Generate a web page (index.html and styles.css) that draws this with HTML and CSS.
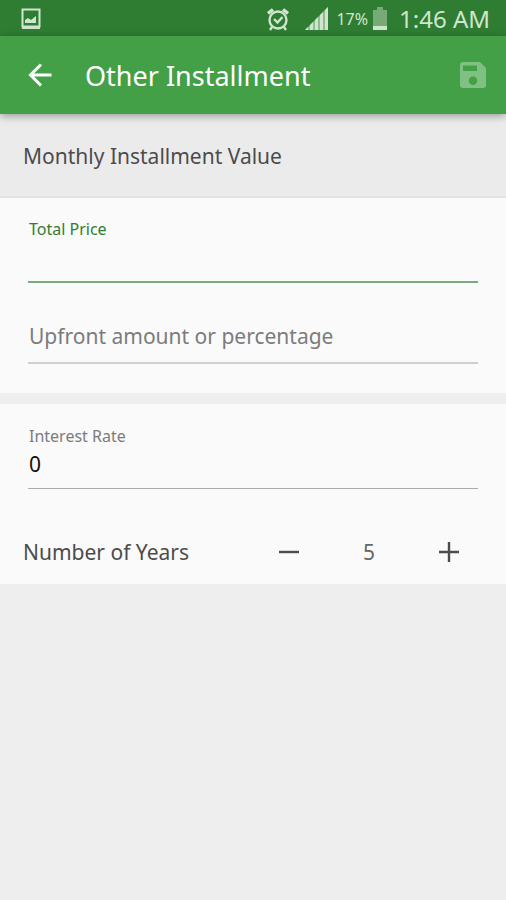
FILE: index.html
```html
<!DOCTYPE html>
<html lang="en">
<head>
<meta charset="utf-8">
<meta name="viewport" content="width=device-width, initial-scale=1">
<title>Other Installment</title>
<link rel="stylesheet" href="styles.css">
</head>
<body>
<div class="status">
  <svg class="status-picture" width="20" height="22" viewBox="0 0 20 22" aria-hidden="true"><path fill="none" stroke="currentColor" stroke-width="2" d="M1.500 1.500h17v17h-17z"/><path fill="currentColor" d="M1 18h18v3H1zM4 15v-3l3-2 3 2 5-4v7z"/></svg>
  <svg class="status-alarm" width="22" height="24" viewBox="0 0 22 24" aria-hidden="true"><g fill="none" stroke="currentColor" stroke-width="2.400"><circle cx="11" cy="13" r="8.500"/><path d="M7 12l3.500 3.500L15.500 10M5 20l-2 3M17 20l2 3"/><path stroke-width="3.500" d="M1 6.500l5-4M21 6.500l-5-4"/></g></svg>
  <svg class="status-signal" width="23" height="23" viewBox="0 0 23 23" aria-hidden="true"><path fill="currentColor" opacity=".6" d="M23 0v23H0z"/><path fill="currentColor" d="M0 23l3-3v3zM5 18l3-3v8H5zM10 13l3-3v13h-3zM15 8l3-3v18h-3zM20 3l3-3v23h-3z"/></svg>
  <span class="status-percent">17%</span>
  <svg class="status-battery" width="14" height="23" viewBox="0 0 14 23" aria-hidden="true"><path fill="currentColor" opacity=".45" d="M4 0h6v3h4v16H0V3h4z"/><path fill="currentColor" d="M0 19h14v4H0z"/></svg>
  <span class="status-time">1:46 AM</span>
</div>
<header class="bar">
  <button class="icon-button" type="button" aria-label="Back"><svg width="24" height="24" viewBox="0 0 24 24"><path fill="none" stroke="currentColor" stroke-width="3" d="M23.500 12H3M13 1.500L2.500 12 13 22.500"/></svg></button>
  <h1 class="title">Other Installment</h1>
  <button class="icon-button save" type="button" aria-label="Save" disabled><svg width="26" height="26" viewBox="0 0 26 26"><path fill="currentColor" fill-rule="evenodd" d="M3 0h17l6 6v17a3 3 0 0 1-3 3H3a3 3 0 0 1-3-3V3a3 3 0 0 1 3-3zM3 3.500v5.500h14V3.500zM13 14.500a4.200 4.200 0 1 0 0 8.400 4.200 4.200 0 0 0 0-8.400z"/></svg></button>
</header>
<main>
  <h2 class="section">Monthly Installment Value</h2>
  <form>
    <div class="card price">
      <div class="field active">
        <label class="label" for="total">Total Price</label>
        <input class="input" id="total" type="text">
      </div>
      <div class="field">
        <input class="input" type="text" aria-label="Upfront amount or percentage" placeholder="Upfront amount or percentage">
      </div>
    </div>
    <div class="card terms">
      <div class="field rate">
        <label class="label" for="rate">Interest Rate</label>
        <input class="input" id="rate" type="text" value="0">
      </div>
      <div class="years">
        <span class="years-label">Number of Years</span>
        <button class="step" type="button" aria-label="Fewer years"><svg width="20" height="20" viewBox="0 0 20 20"><path stroke="currentColor" stroke-width="2.400" d="M0 10h20"/></svg></button>
        <output class="count">5</output>
        <button class="step" type="button" aria-label="More years"><svg width="20" height="20" viewBox="0 0 20 20"><path stroke="currentColor" stroke-width="2.400" d="M0 10h20M10 0v20"/></svg></button>
      </div>
    </div>
  </form>
</main>
</body>
</html>
```
FILE: styles.css
```css
* { box-sizing: border-box; }
body {
  margin: 0;
  background: #eee;
  color: #4c4c4c;
  font-family: "Noto Sans", sans-serif;
  font-size: 21px;
}
svg { display: block; flex: none; }
button {
  display: flex;
  align-items: center;
  justify-content: center;
  padding: 0;
  border: 0;
  background: none;
  color: inherit;
}
.status {
  display: flex;
  align-items: center;
  height: 36px;
  padding: 1px 16px 0 21px;
  background: #2f7d32;
  color: #cfe5cf;
}
.status-alarm { margin-left: auto; }
.status-signal { margin-left: 16px; }
.status-percent { margin-left: 8px; font-size: 16px; }
.status-battery { margin-left: 5px; }
.status-time { margin-left: 12px; font-size: 24px; }
.bar {
  position: relative;
  display: flex;
  align-items: center;
  height: 78px;
  padding: 0 17px 0 24px;
  background: #43a047;
  color: #fff;
  box-shadow: 0 2px 8px rgba(0, 0, 0, .35);
}
.icon-button { width: 32px; height: 48px; }
.title {
  flex: 1;
  margin: 0 0 0 29px;
  font-size: 27px;
  font-weight: 400;
}
.save { color: #80c083; }
.section {
  display: flex;
  align-items: center;
  height: 84px;
  margin: 0;
  padding: 2px 23px 0;
  border-bottom: 2px solid #e2e2e2;
  background: #ebebeb;
  font-size: 21px;
  font-weight: 400;
}
.card { background: #fafafa; }
.price {
  display: grid;
  gap: 27px;
  padding: 20px 28px 29px;
}
.terms {
  margin-top: 11px;
  padding: 21px 28px 0;
}
.field { display: flex; flex-direction: column; }
.label {
  padding-left: 1px;
  color: #7c7c7c;
  font-size: 16px;
  line-height: 22px;
}
.input {
  width: 100%;
  height: 54px;
  padding: 0 0 0 1px;
  border: 0;
  border-bottom: 2px solid #cfcfcf;
  border-radius: 0;
  outline: 0;
  background: none;
  color: #111;
  font: inherit;
}
.input::placeholder { color: #7c7c7c; opacity: 1; }
.active .label { color: #2e7d32; }
.active .input { height: 43px; border-color: #7ba982; }
.rate .input { height: 42px; padding-bottom: 8px; border-bottom: 1px solid #aaa; }
.years {
  display: flex;
  align-items: center;
  height: 95px;
  margin: 0 -11px 0 -5px;
  padding-top: 30px;
}
.years-label { flex: 1; }
.step, .count { width: 80px; height: 64px; }
.count {
  display: flex;
  align-items: center;
  justify-content: center;
  color: #666;
}
```
